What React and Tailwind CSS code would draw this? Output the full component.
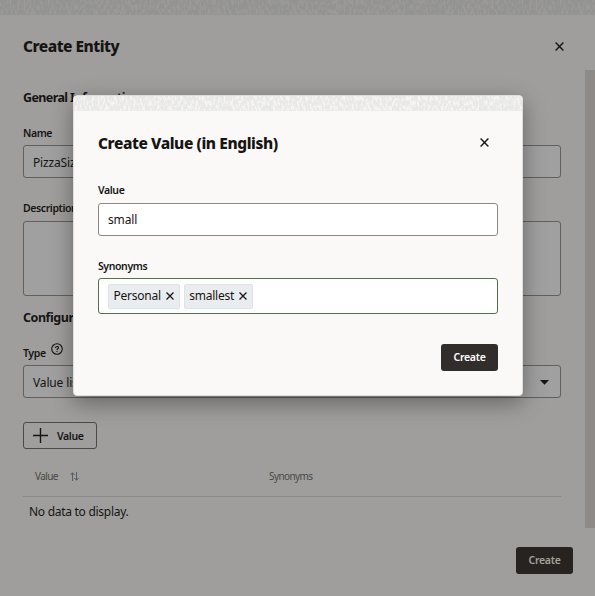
import React from "react";

function Texture({ id, color, opacity }) {
  return (
    <svg className="block h-full w-full" aria-hidden="true">
      <filter id={id} x="0" y="0" width="100%" height="100%" colorInterpolationFilters="sRGB">
        <feTurbulence type="fractalNoise" baseFrequency="0.5 0.2" numOctaves="2" seed="7" />
        <feColorMatrix type="matrix" values={`0 0 0 0 ${color} 0 0 0 0 ${color} 0 0 0 0 ${color} 5 0 0 0 -1.8`} />
      </filter>
      <rect width="100%" height="100%" filter={`url(#${id})`} opacity={opacity} />
    </svg>
  );
}

function Cross({ className }) {
  return (
    <svg viewBox="0 0 9 9" className={className} fill="none" stroke="currentColor" strokeWidth="1.4">
      <path d="M.6.6 8.4 8.4M8.4.6.6 8.4" />
    </svg>
  );
}

function Label({ children }) {
  return <div className="h-[16px] text-[10.5px] leading-[16px] font-semibold tracking-[-0.4px] whitespace-nowrap">{children}</div>;
}

function Chip({ children }) {
  return (
    <span className="flex h-[25px] items-center rounded-[2px] border border-[#dfe3e4] bg-[#e9edef] pr-[5px] pl-[4.5px] text-[12px] tracking-[-0.25px]">
      {children}
      <Cross className="ml-[5px] h-[8px] w-[8px]" />
    </span>
  );
}

function EntityPanel() {
  return (
    <div className="flex h-full flex-col">
      <div className="h-[15px] shrink-0 bg-[#9b9a99]">
        <Texture id="page-band" color="0.56" opacity="0.6" />
      </div>
      <header className="flex h-[55px] shrink-0 items-center justify-between pt-[8px] pr-[31px] pb-[1px] pl-[23px]">
        <h1 className="text-[15.5px] leading-[20px] font-extrabold tracking-[-0.5px]">Create Entity</h1>
        <Cross className="h-[9px] w-[9px]" />
      </header>
      <div className="flex h-[458px] shrink-0">
        <main className="flex w-[585px] flex-col pr-[24px] pl-[23px]">
          <h2 className="mt-[18px] h-[20px] text-[12.5px] leading-[20px] font-bold tracking-[-0.6px]">General Information</h2>
          <div className="mt-[17px]"><Label>Name</Label></div>
          <div className="mt-[4px] flex h-[33px] items-center rounded-[3px] border border-[#62605f] bg-[#a0a0a0] px-[9px] pt-[2px] text-[12px] tracking-[-0.15px]">PizzaSize</div>
          <div className="mt-[22px]"><Label>Description</Label></div>
          <div className="mt-[5px] h-[75px] shrink-0 rounded-[3px] border border-[#62605f] bg-[#a0a0a0]" />
          <h2 className="mt-[12px] h-[20px] text-[12.5px] leading-[20px] font-bold tracking-[-0.45px]">Configuration</h2>
          <div className="mt-[16px] flex h-[17px]">
            <div className="pt-[1px]"><Label>Type</Label></div>
            <svg viewBox="0 0 12 12" className="-mt-px ml-[5px] h-[12px] w-[12px]" fill="none" stroke="currentColor" strokeWidth="1.1">
              <circle cx="6" cy="6" r="5.3" />
              <path d="M4.5 4.9C4.5 2.9 7.6 3 7.5 4.8 7.4 5.7 6 5.9 6 7M6 8v1.1" />
            </svg>
          </div>
          <div className="mt-[4px] flex h-[33px] shrink-0 items-center justify-between rounded-[3px] border border-[#62605f] bg-[#a0a0a0] pt-[2px] pr-[11px] pl-[9px] text-[12px] tracking-[-0.15px]">
            Value list
            <svg viewBox="0 0 9 5" className="h-[5px] w-[9px]" fill="currentColor"><path d="M0 0h9L4.5 4.8z" /></svg>
          </div>
          <button className="mt-[24px] flex h-[27px] w-[74px] shrink-0 items-center rounded-[3px] border border-[#4c4a48] pl-[9px] text-[10.5px] font-semibold tracking-[-0.35px]">
            <svg viewBox="0 0 15 15" className="mr-[9px] h-[15px] w-[15px]" fill="none" stroke="currentColor" strokeWidth="1.4"><path d="M0 7.5h15M7.5 0v15" /></svg>
            <span className="pt-[2px]">Value</span>
          </button>
          <div className="flex h-[48px] shrink-0 items-center border-b border-[#8a8987] pt-[8px] pl-[12px] text-[10px] tracking-[-0.6px] text-[#494745]">
            <div className="flex w-[234px] items-center">
              Value
              <svg viewBox="0 0 9 9" className="ml-[12px] h-[9px] w-[9px]" fill="none" stroke="#555b62" strokeWidth="1"><path d="M2.5 9V.8M.4 3 2.5.8 4.6 3M6.5 0v8.2M4.4 6l2.1 2.2L8.6 6" /></svg>
            </div>
            <span>Synonyms</span>
          </div>
          <div className="pt-[5px] pl-[6px] text-[12px] leading-[20px] tracking-[-0.28px]">No data to display.</div>
        </main>
        <div className="w-[10px] bg-[#8e8a88]" />
      </div>
      <footer className="flex justify-end pt-[19px] pr-[22px]">
        <button className="h-[27px] w-[57px] rounded-[3px] bg-[#272320] text-[10.5px] font-semibold tracking-[-0.3px] text-[#a3a19e]">Create</button>
      </footer>
    </div>
  );
}

function ValueDialog() {
  return (
    <section role="dialog" className="absolute top-[95px] left-[73px] flex h-[301px] w-[450px] flex-col overflow-hidden rounded-[4px] border border-[#e0dedc] bg-[#fbf9f8] shadow-[0_7px_22px_rgba(0,0,0,0.36)]">
      <div className="h-[15px] shrink-0 bg-[#f5f4f3]">
        <Texture id="dialog-band" color="0.88" opacity="0.6" />
      </div>
      <header className="flex h-[64px] shrink-0 items-center justify-between pr-[33px] pb-[2px] pl-[24px]">
        <h1 className="pt-[2px] text-[15.5px] leading-[20px] font-extrabold tracking-[-0.42px]">Create Value (in English)</h1>
        <Cross className="h-[9px] w-[9px]" />
      </header>
      <div className="flex flex-col px-[24px] pt-[7px]">
        <Label>Value</Label>
        <div className="mt-[5px] flex h-[33px] items-center rounded-[3px] border border-[#8b8886] bg-white px-[9px] text-[12px] tracking-[-0.15px]">small</div>
        <div className="mt-[22px]"><Label>Synonyms</Label></div>
        <div className="mt-[4px] flex h-[36px] items-center gap-[4px] rounded-[3px] border border-[#547046] bg-white px-[9px]">
          <Chip>Personal</Chip>
          <Chip>smallest</Chip>
        </div>
      </div>
      <footer className="flex justify-end pt-[30px] pr-[24px]">
        <button className="h-[27px] w-[57px] rounded-[3px] bg-[#312d2a] text-[10.5px] font-semibold tracking-[-0.3px] text-white">Create</button>
      </footer>
    </section>
  );
}

export default function App() {
  return (
    <div className="relative h-[596px] w-[595px] overflow-hidden bg-[#9f9e9c] font-['Noto_Sans','Open_Sans',sans-serif] text-[#161513]">
      <EntityPanel />
      <ValueDialog />
    </div>
  );
}
